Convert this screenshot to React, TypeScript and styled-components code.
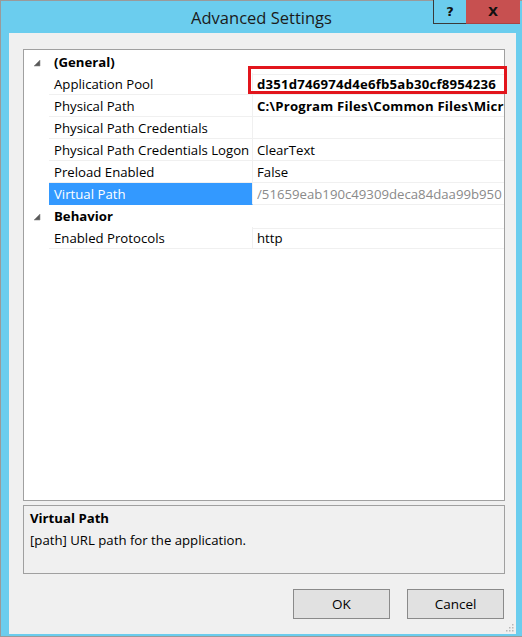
import { createGlobalStyle, styled } from 'styled-components';

const GlobalStyle = createGlobalStyle`
  html, body {
    margin: 0;
    padding: 0;
    background: #ffffff;
  }
  body {
    font-family: "Open Sans", "Noto Sans", "Liberation Sans", sans-serif;
    color: #000;
  }
`;

type Prop = {
  label: string;
  value?: string;
  bold?: boolean;
  muted?: boolean;
  selected?: boolean;
  marked?: boolean;
};

type Category = {
  name: string;
  props: Prop[];
};

const categories: Category[] = [
  {
    name: '(General)',
    props: [
      { label: 'Application Pool', value: 'd351d746974d4e6fb5ab30cf8954236', bold: true, marked: true },
      { label: 'Physical Path', value: 'C:\\Program Files\\Common Files\\Microsoft Shared', bold: true },
      { label: 'Physical Path Credentials', value: '' },
      { label: 'Physical Path Credentials Logon', value: 'ClearText' },
      { label: 'Preload Enabled', value: 'False' },
      { label: 'Virtual Path', value: '/51659eab190c49309deca84daa99b950', muted: true, selected: true },
    ],
  },
  {
    name: 'Behavior',
    props: [{ label: 'Enabled Protocols', value: 'http' }],
  },
];

const Window = styled.div`
  width: 522px;
  height: 637px;
  box-sizing: border-box;
  background: #6bcdee;
  border: 1px solid #9a9a9a;
  border-right: none;
  display: flex;
  flex-direction: column;
`;

const TitleBar = styled.div`
  height: 32px;
  display: grid;
  grid-template-columns: 1fr auto 1fr;
  align-items: start;
`;

const Title = styled.div`
  grid-column: 2;
  font-size: 16.5px;
  line-height: 33px;
  color: #1b1b1b;
`;

const CaptionButtons = styled.div`
  grid-column: 3;
  justify-self: end;
  display: flex;
  margin-right: 2px;
  margin-top: -1px;
`;

const CaptionButton = styled.div<{ $close?: boolean }>`
  width: ${({ $close }) => ($close ? '54px' : '33px')};
  height: 24px;
  box-sizing: border-box;
  display: flex;
  align-items: center;
  justify-content: center;
  font-family: "DejaVu Sans", "Liberation Sans", sans-serif;
  font-weight: bold;
  font-size: 13px;
  color: #111;
  background: ${({ $close }) => ($close ? '#c75050' : '#6bcdee')};
  border-left: ${({ $close }) => ($close ? 'none' : '1px solid #3a3a3a')};
  border-bottom: 1px solid ${({ $close }) => ($close ? '#a94444' : '#3a3a3a')};
`;

const Client = styled.div`
  flex: 1;
  margin: 0 6px 2px 8px;
  background: #f0f0f0;
  display: flex;
  flex-direction: column;
  padding: 16px 11px 0 14px;
  position: relative;
`;

const Grid = styled.div`
  height: 452px;
  box-sizing: border-box;
  background: #ffffff;
  border: 1px solid #a0a0a0;
  padding-top: 1px;
  position: relative;
  font-size: 13.2px;
`;

const Row = styled.div`
  display: grid;
  grid-template-columns: 25px 204px 1fr;
  height: 22px;
`;

const Gutter = styled.div`
  display: flex;
  align-items: center;
  justify-content: center;
`;

const CategoryName = styled.div`
  grid-column: 2 / 4;
  font-weight: bold;
  padding-left: 5px;
  line-height: 23px;
  border-bottom: 1px solid #f0f0f0;
`;

const Label = styled.div<{ $selected?: boolean }>`
  padding-left: 5px;
  line-height: 23px;
  white-space: nowrap;
  overflow: hidden;
  background: ${({ $selected }) => ($selected ? '#3399ff' : '#ffffff')};
  color: ${({ $selected }) => ($selected ? '#ffffff' : '#000000')};
  border-bottom: 1px solid ${({ $selected }) => ($selected ? '#3399ff' : '#f0f0f0')};
  border-right: 1px solid #f0f0f0;
  box-sizing: border-box;
  height: 22px;
`;

const Value = styled.div<{ $bold?: boolean; $muted?: boolean }>`
  position: relative;
  padding-left: 4px;
  line-height: 23px;
  height: 22px;
  box-sizing: border-box;
  white-space: nowrap;
  font-weight: ${({ $bold }) => ($bold ? 'bold' : 'normal')};
  letter-spacing: ${({ $bold }) => ($bold ? '0.2px' : '0')};
  color: ${({ $muted }) => ($muted ? '#8a8a8a' : '#000000')};
  border-bottom: 1px solid #f0f0f0;
  min-width: 0;
`;

const Clip = styled.div`
  overflow: hidden;
  height: 21px;
`;

const Marker = styled.div`
  position: absolute;
  left: -5px;
  top: -7px;
  right: -3px;
  bottom: 0;
  border: 3px solid #e2151c;
  pointer-events: none;
`;

const Description = styled.div`
  margin-top: 4px;
  height: 69px;
  box-sizing: border-box;
  border: 1px solid #a0a0a0;
  padding: 1px 6px;
  font-size: 13.2px;
  line-height: 22px;
`;

const DescTitle = styled.div`
  font-weight: bold;
`;

const Buttons = styled.div`
  display: flex;
  justify-content: flex-end;
  gap: 17px;
  margin-top: 15px;
  padding-right: 1px;
`;

const Button = styled.button`
  width: 97px;
  height: 30px;
  background: #e1e1e1;
  border: 1px solid #8a8a8a;
  font-family: inherit;
  font-size: 13.5px;
  color: #000;
  padding: 0;
`;

const Grip = styled.svg`
  position: absolute;
  right: 2px;
  bottom: 2px;
`;

const Expander = () => (
  <svg width="8" height="8" viewBox="0 0 8 8">
    <polygon points="7,1 7,7 1,7" fill="#595959" stroke="#8a8a8a" strokeWidth="0.6" />
  </svg>
);

const App = () => {
  return (
    <>
      <GlobalStyle />
      <Window>
        <TitleBar>
          <Title>Advanced Settings</Title>
          <CaptionButtons>
            <CaptionButton>?</CaptionButton>
            <CaptionButton $close>X</CaptionButton>
          </CaptionButtons>
        </TitleBar>
        <Client>
          <Grid>
            {categories.map((cat) => (
              <div key={cat.name}>
                <Row>
                  <Gutter>
                    <Expander />
                  </Gutter>
                  <CategoryName>{cat.name}</CategoryName>
                </Row>
                {cat.props.map((p) => (
                  <Row key={p.label}>
                    <Gutter />
                    <Label $selected={p.selected}>{p.label}</Label>
                    <Value $bold={p.bold} $muted={p.muted}>
                      <Clip>{p.value || '\u00a0'}</Clip>
                      {p.marked && <Marker />}
                    </Value>
                  </Row>
                ))}
              </div>
            ))}
          </Grid>
          <Description>
            <DescTitle>Virtual Path</DescTitle>
            <div>[path] URL path for the application.</div>
          </Description>
          <Buttons>
            <Button>OK</Button>
            <Button>Cancel</Button>
          </Buttons>
          <Grip width="10" height="10" viewBox="0 0 10 10">
            {[
              [8, 2],
              [8, 5],
              [5, 5],
              [8, 8],
              [5, 8],
              [2, 8],
            ].map(([x, y]) => (
              <rect key={`${x}-${y}`} x={x} y={y} width="1.5" height="1.5" fill="#b8b8b8" />
            ))}
          </Grip>
        </Client>
      </Window>
    </>
  );
};

export default App;
